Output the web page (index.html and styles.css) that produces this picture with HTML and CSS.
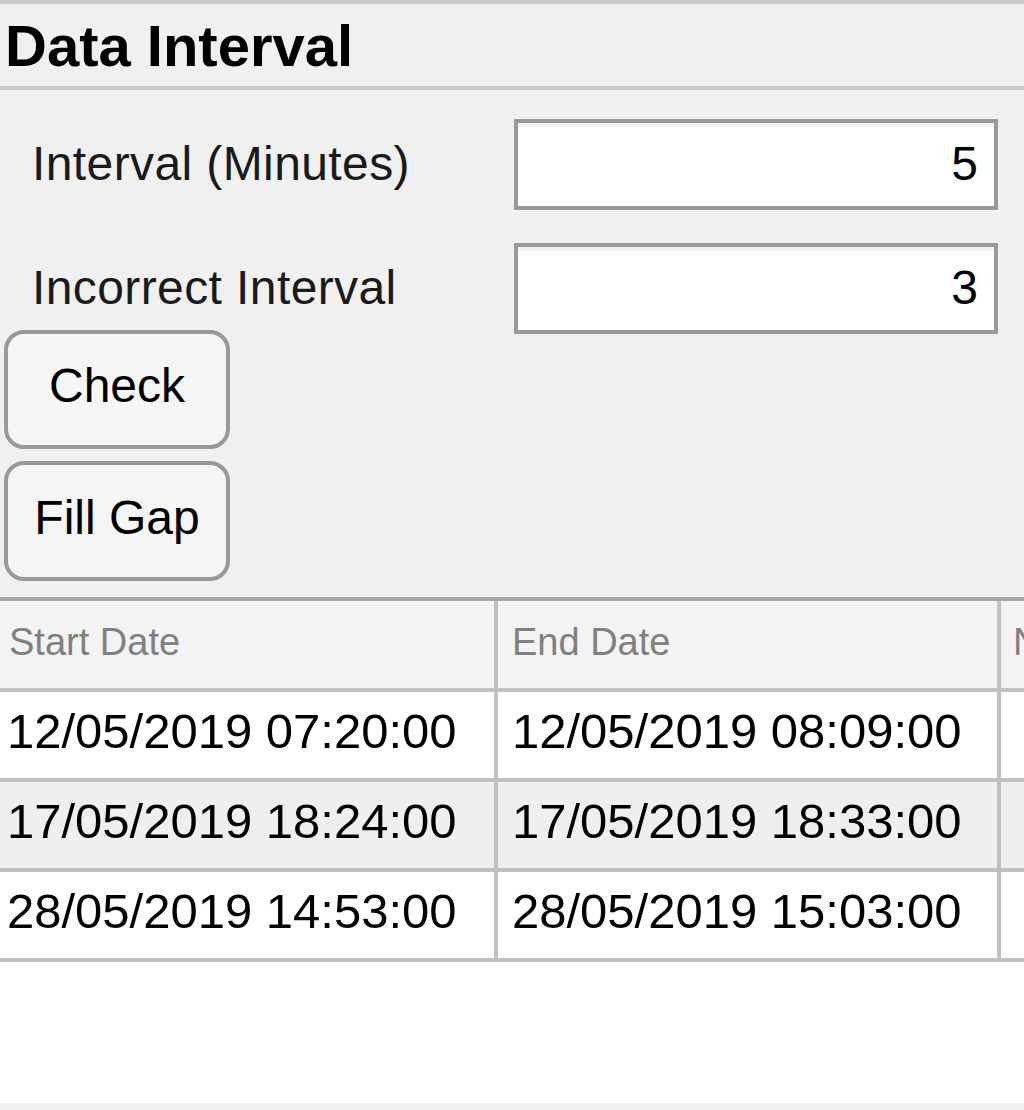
FILE: index.html
```html
<!DOCTYPE html>
<html>
<head>
<meta charset="utf-8">
<link rel="stylesheet" href="styles.css">
</head>
<body>
<div class="panel">
  <div class="title">Data Interval</div>
  <div class="form">
    <div class="field">
      <label class="label">Interval (Minutes)</label>
      <div class="input">5</div>
    </div>
    <div class="field">
      <label class="label">Incorrect Interval</label>
      <div class="input">3</div>
    </div>
    <div class="actions">
      <button class="btn">Check</button>
      <button class="btn">Fill Gap</button>
    </div>
  </div>
  <div class="grid-wrap">
    <div class="row head">
      <div class="cell">Start Date</div>
      <div class="cell">End Date</div>
      <div class="cell">No. of Missing</div>
    </div>
    <div class="row">
      <div class="cell">12/05/2019 07:20:00</div>
      <div class="cell">12/05/2019 08:09:00</div>
      <div class="cell"></div>
    </div>
    <div class="row alt">
      <div class="cell">17/05/2019 18:24:00</div>
      <div class="cell">17/05/2019 18:33:00</div>
      <div class="cell"></div>
    </div>
    <div class="row">
      <div class="cell">28/05/2019 14:53:00</div>
      <div class="cell">28/05/2019 15:03:00</div>
      <div class="cell"></div>
    </div>
  </div>
</div>
</body>
</html>
```
FILE: styles.css
```css
html, body {
  margin: 0;
  padding: 0;
  background: #f0f0f0;
  font-family: "Liberation Sans", Arial, sans-serif;
}
.panel {
  border-top: 4px solid #c8c8c8;
  background: #f0f0f0;
  height: 1106px;
  overflow: hidden;
  display: flex;
  flex-direction: column;
}
.title {
  height: 82px;
  line-height: 84px;
  padding-left: 5px;
  font-size: 58px;
  font-weight: bold;
  color: #000;
  border-bottom: 4px solid #c8c8c8;
}
.form {
  padding-top: 29px;
}
.field {
  display: flex;
  align-items: center;
  height: 91px;
  padding-left: 32px;
}
.field + .field {
  margin-top: 33px;
}
.label {
  flex: 0 0 482px;
  font-size: 48px;
  letter-spacing: 0.4px;
  color: #1a1a1a;
  padding-bottom: 2px;
}
.input {
  box-sizing: border-box;
  width: 484px;
  height: 91px;
  border: 4px solid #999;
  background: #fff;
  box-shadow: inset 0 4px 0 #f2f2f2;
  text-align: right;
  padding-right: 16px;
  font-size: 48px;
  line-height: 81px;
  color: #000;
}
.actions {
  margin-top: -4px;
  padding-left: 4px;
  display: flex;
  flex-direction: column;
  align-items: flex-start;
  gap: 12px;
}
.btn {
  box-sizing: border-box;
  width: 226px;
  height: 119px;
  border: 4px solid #999;
  border-radius: 20px;
  background: #f5f5f5;
  font-family: "Liberation Sans", Arial, sans-serif;
  font-size: 48px;
  color: #000;
  padding: 0 0 8px 0;
  margin: 0;
}
.btn + .btn {
  height: 120px;
}
.grid-wrap {
  margin-top: 16px;
  border-top: 4px solid #a8a8a8;
  background: #fff;
  height: 502px;
  overflow: hidden;
}
.row {
  display: grid;
  grid-template-columns: 498px 503px 500px;
  height: 90px;
}
.row.head {
  height: 91px;
  background: #f3f3f3;
}
.row.alt {
  background: #efefef;
}
.cell {
  box-sizing: border-box;
  border-right: 4px solid #c0c0c0;
  border-bottom: 4px solid #c0c0c0;
  display: flex;
  align-items: center;
  padding-left: 7px;
  padding-bottom: 8px;
  font-size: 49px;
  color: #000;
  white-space: nowrap;
  overflow: hidden;
}
.cell:nth-child(2) {
  padding-left: 14px;
}
.row.head .cell {
  font-size: 38px;
  color: #808080;
  padding-left: 9px;
  padding-bottom: 4px;
}
.row.head .cell:nth-child(2) {
  padding-left: 14px;
}
.row.head .cell:nth-child(3) {
  padding-left: 12px;
}
```
